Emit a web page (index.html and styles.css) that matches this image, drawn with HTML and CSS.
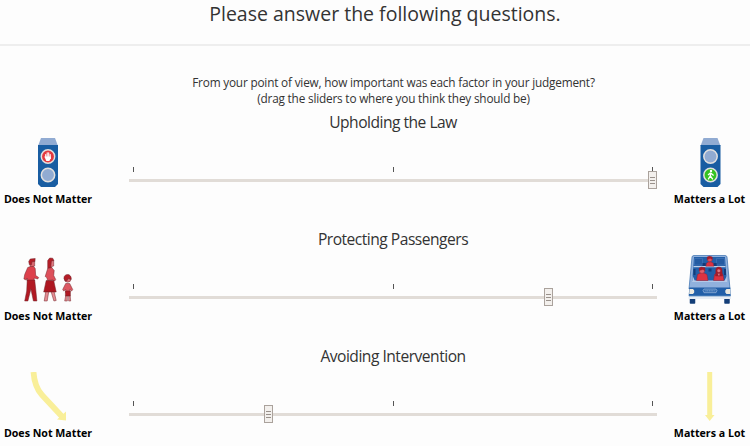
FILE: index.html
```
<!DOCTYPE html>
<html lang="en">
<head>
<meta charset="utf-8">
<title>Questions</title>
<link rel="stylesheet" href="styles.css">
</head>
<body>
<header class="page-head"><h1>Please answer the following questions.</h1></header>
<main>
  <p class="intro">From your point of view, how important was each factor in your judgement?<br>(drag the sliders to where you think they should be)</p>

  <section class="factor">
    <h2>Upholding the Law</h2>
    <div class="row">
      <div class="end">
        <svg class="icon" viewBox="0 0 60 50">
          <path d="M25 0h14l3 8H22z" fill="#91abd2"/><path d="M22 7h20v39l-3 3H25l-3-3z" fill="#195da2"/>
          <circle cx="32" cy="18.500" r="6.700" fill="#e5393f" stroke="#e2e0df" stroke-width="1.500"/>
          <path d="M29.700 16.500v3M31.200 14.800v5M32.700 14.800v5M34.200 16.500v4" stroke="#fff" stroke-width="1.100" stroke-linecap="round"/><path d="M28.300 18.500h6.400v2l-1.400 2.500h-3z" fill="#fff"/>
          <circle cx="32" cy="37" r="6.700" fill="#91abd2" stroke="#e2e0df" stroke-width="1.500"/>
        </svg>
        <b>Does Not Matter</b>
      </div>
      <div class="slider"><div class="ticks"><i></i><i></i><i></i></div><div class="track"></div><div class="handle" style="left:519px"><i></i><i></i><i></i></div></div>
      <div class="end">
        <svg class="icon" viewBox="0 0 60 50">
          <path d="M23.500 0h14l3 8h-20z" fill="#91abd2"/><path d="M20.500 7h20v39l-3 3h-14l-3-3z" fill="#195da2"/>
          <circle cx="30.500" cy="18.500" r="6.700" fill="#91abd2" stroke="#e2e0df" stroke-width="1.500"/>
          <circle cx="30.500" cy="37" r="6.700" fill="#35c321" stroke="#e2e0df" stroke-width="1.500"/>
          <circle cx="31" cy="33" r="1.200" fill="#fff"/><path d="M30.700 34.500l-.3 3.500 2.400 3.300M30.200 38l-2 3.300M30.400 35l-2.400 2M31 35.200l2.600 2.200" fill="none" stroke="#fff" stroke-width="1.300"/>
        </svg>
        <b>Matters a Lot</b>
      </div>
    </div>
  </section>

  <section class="factor">
    <h2>Protecting Passengers</h2>
    <div class="row">
      <div class="end">
        <svg class="icon" viewBox="0 0 60 50">
          <g transform="translate(.7 2.500)" stroke="#70242b" stroke-width=".5" stroke-linejoin="round">
            <path d="M13.500 3h4.500v5.500l-2 .5v1.500h-2.500z" fill="#d96870"/><path d="M12 4l1.500-2.500 5-.5-.3 3-3 .3-.5 3h-2z" fill="#b51d27"/>
            <path d="M11 10l3-1h3l1.500 2 .5 7 3 2-1 1.500-3.500-1v3h-7v-3l-1 2-2.300-1 .8-4.500z" fill="#dd414c"/>
            <path d="M10.500 22.500h7.500l1 9 1.200 12h-3.500l-2.500-12-3 12H8l2-10z" fill="#b11923"/>
            <path d="M33.500 3h3.500v5.500l-2 .5v1.500h-2z" fill="#e07880"/><path d="M31 11V3l2-2.500 3 .2L37.200 3l-2.500.5-.7 7z" fill="#b51d27"/>
            <path d="M31 11l4-1 2.500 3-.5 5 2 4-1 1.500-2-1-5 .5-1-3-1.500-1z" fill="#dd505b"/>
            <path d="M29.500 23h7.500l2.500 11.500H27z" fill="#ae1721"/><path d="M29 34.500h3l-1.500 9h-3zM34.500 34.500h3l2 8.500-2.300.5z" fill="#e58c92"/>
            <circle cx="51" cy="21.500" r="3.200" fill="#dc737a"/><path d="M47.200 21c0-3 1.800-4 3.800-4s4 2 3.500 5l-3-1-1 2-2 .5z" fill="#b51d27"/>
            <path d="M49 26h4l3 6-1 1.500-2-1.500v3h-4v-3l-2 1.500-1-1.500z" fill="#dd5862"/><path d="M48.700 33.500h5v5h-5z" fill="#b11923"/>
            <path d="M48.900 38.500h1.700v5h-2.600zM52 38.500h1.500l.5 5h-2z" fill="#e58c92"/>
          </g>
        </svg>
        <b>Does Not Matter</b>
      </div>
      <div class="slider"><div class="ticks"><i></i><i></i><i></i></div><div class="track"></div><div class="handle" style="left:415px"><i></i><i></i><i></i></div></div>
      <div class="end">
        <svg class="icon" viewBox="0 0 60 50">
          <path d="M12 2Q12.200 .5 14 .5h31q1.800 0 2 1.500L50 34H9z" fill="#91b1dd" stroke="#386fae" stroke-width=".7"/>
          <path d="M14 2h31l1.800 24H12.200z" fill="#225fa8"/>
          <path d="M13.500 11.700h32" stroke="#bdcfea" stroke-width="1.200"/>
          <path d="M14.500 3.500h8V10h-8zM36.500 3.500h8V10h-8z" fill="#245ba2" stroke="#4f7fbe" stroke-width=".5"/>
          <path d="M22.500 8h3.200v3h-3.200zM33.500 8h3.200v3h-3.200zM13.500 14h2v6h-2zM28.500 13.500h3v3h-3zM44 14h2v6h-2z" fill="#143c79"/>
          <path d="M12.700 21l2 4.500h30l2-4.500.5 6H12.200z" fill="#b5c9e7"/>
          <g stroke="#8b1c30" stroke-width=".4">
            <path d="M25.800 11.300l.8-3.300 2-1h2.500l2 1 .8 3.300z" fill="#dc3341"/><circle cx="29.800" cy="4.200" r="2.500" fill="#df515b"/><path d="M27.200 4.500V2l2-.8 3 .7v2.400l-2-1z" fill="#a91a27"/>
            <path d="M16.500 25.500l1-6 3-1.500h3.500l3 1.500 1 6z" fill="#dc3341"/><circle cx="22" cy="15.700" r="2.700" fill="#df606a"/><path d="M19.200 15.500V13l2-1 3.700.7v2.800l-2-1z" fill="#a91a27"/>
            <path d="M33.500 25.500l1-6 3-1.500H40l3 1.500 1 6z" fill="#dc3341"/><path d="M35.500 21l.4-7 1-1.500 2-.5 2 .5 1 1.500.6 7z" fill="#a91a27"/><circle cx="38.800" cy="15.800" r="1.800" fill="#e27780"/><path d="M37.600 18.500h2.500l-1.200 3z" fill="#ef9da2"/>
          </g>
          <path d="M10.500 43.500h4v4.500h-4zM45 43.500h4v4.500h-4z" fill="#153f78" stroke="#153f78" stroke-width="1.500" stroke-linejoin="round"/>
          <path d="M9.300 32.500h40.900l.6 8.500H8.700z" fill="#225fa8"/><path d="M8.500 40.700H51V44H8.500z" fill="#e7edf4"/><path d="M9 40.800h41.500" stroke="#346eaf" stroke-width="1"/>
          <path d="M9.500 34h3.500l1.200 1.500v2L13 39H9.200zM50 34h-3.500l-1.200 1.500v2l1.200 1.500h3.900z" fill="#ece9df"/>
          <path d="M24 34h12l1 1.500-1 2.200H24l-1-2.200z" fill="#3a72b4" stroke="#9ab5da" stroke-width=".7"/><path d="M25.500 35.800h9" stroke="#9ab5da" stroke-width=".8" stroke-dasharray="1 .7"/>
        </svg>
        <b>Matters a Lot</b>
      </div>
    </div>
  </section>

  <section class="factor">
    <h2>Avoiding Intervention</h2>
    <div class="row">
      <div class="end">
        <svg class="icon" viewBox="0 0 60 50"><path d="M17.500 0Q18.500 15 26 23L46 44.500" fill="none" stroke="#f9ef99" stroke-width="5.800"/><path d="M50 39.500v9l-9-1z" fill="#f9ef99"/></svg>
        <b>Does Not Matter</b>
      </div>
      <div class="slider"><div class="ticks"><i></i><i></i><i></i></div><div class="track"></div><div class="handle" style="left:135px"><i></i><i></i><i></i></div></div>
      <div class="end">
        <svg class="icon" viewBox="0 0 60 50"><path d="M27.200 0h5v43h2.300L29.700 49 25 43h2.200z" fill="#f9ef99"/></svg>
        <b>Matters a Lot</b>
      </div>
    </div>
  </section>
</main>
</body>
</html>
```
FILE: styles.css
```
* { box-sizing: border-box; }
body { margin: 0; width: 750px; height: 446px; overflow: hidden; background: #fdfdfd; color: #333; font-family: "Open Sans", sans-serif; }
.page-head { height: 46px; border-bottom: 2px solid #eeeeee; padding-left: 20px; text-align: center; }
h1 { margin: 0; font-size: 19.5px; line-height: 28px; font-weight: 400; }
.intro { margin: 28px 0 3px; padding-left: 37px; text-align: center; font-size: 11.8px; line-height: 16px; letter-spacing: -.19px; }
.factor { height: 117px; }
h2 { margin: 0; padding-left: 36px; font-size: 15.6px; line-height: 26px; font-weight: 400; text-align: center; letter-spacing: -.5px; }
.row { display: grid; grid-template-columns: 96px 573px 81px; padding-top: 3px; }
.slider { position: relative; margin-left: 33px; width: 528px; padding-top: 29px; }
.end { display: flex; flex-direction: column; align-items: center; }
.icon { display: block; width: 60px; height: 50px; }
.end:first-child .icon { margin-right: 4px; }
.end b { color: #000; font-size: 10.65px; line-height: 16px; font-weight: 700; margin-top: 3px; white-space: nowrap; }
.ticks { display: flex; justify-content: space-between; padding: 0 4px; height: 12px; }
.ticks i { width: 1px; height: 5px; background: #555; }
.track { height: 3px; background: #e1dcd7; }
.handle { position: absolute; top: 33px; width: 9px; height: 18px; border: 1px solid #aaa29c; background: #f3f0ed; display: flex; flex-direction: column; align-items: center; justify-content: center; gap: 2px; }
.handle i { width: 5px; height: 1px; background: #99918b; }
```
